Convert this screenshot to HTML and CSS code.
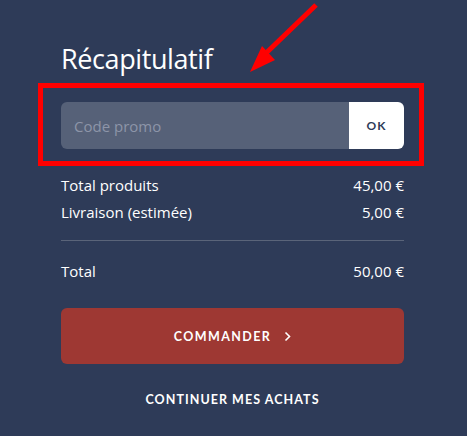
FILE: index.html
```html
<!DOCTYPE html>
<html lang="fr">
<head>
<meta charset="utf-8">
<link rel="stylesheet" href="styles.css">
</head>
<body>
<svg class="arrow" width="90" height="80" viewBox="0 0 90 80">
  <line x1="86" y1="5" x2="32" y2="57" stroke="#ff0000" stroke-width="5" stroke-linecap="butt"/>
  <polygon points="20,72 32,46 45,60" fill="#ff0000"/>
</svg>
<main class="summary">
  <h1 class="title">Récapitulatif</h1>
  <div class="promo">
    <div class="promo-input">Code promo</div>
    <div class="promo-ok">OK</div>
  </div>
  <div class="lines">
    <div class="line"><span>Total produits</span><span>45,00 €</span></div>
    <div class="line"><span>Livraison (estimée)</span><span>5,00 €</span></div>
  </div>
  <div class="divider"></div>
  <div class="line total"><span>Total</span><span>50,00 €</span></div>
  <div class="order">COMMANDER<svg class="chev" width="7" height="11" viewBox="0 0 7 11"><path d="M1.5 1.5 L5.5 5.5 L1.5 9.5" fill="none" stroke="#ffffff" stroke-width="1.6"/></svg></div>
  <div class="continue">CONTINUER MES ACHATS</div>
</main>
</body>
</html>
```
FILE: styles.css
```css
html, body {
  margin: 0;
  padding: 0;
}
body {
  background: #2e3b58;
  width: 467px;
  height: 436px;
  overflow: hidden;
  position: relative;
  font-family: "Open Sans", "Noto Sans", sans-serif;
  color: #ffffff;
}
.arrow {
  position: absolute;
  left: 230px;
  top: 0;
}
.summary {
  width: 343px;
  margin-left: 61px;
  padding-top: 40px;
  display: flex;
  flex-direction: column;
}
.title {
  margin: 0;
  font-size: 27px;
  font-weight: 400;
  line-height: 38px;
  letter-spacing: -0.4px;
}
.promo {
  position: relative;
  margin-top: 24px;
  height: 47px;
  display: flex;
}
.promo::after {
  content: "";
  position: absolute;
  left: -23px;
  right: -20px;
  top: -19px;
  bottom: -17px;
  border: 5px solid #ff0000;
  pointer-events: none;
}
.promo-input {
  flex: 1;
  background: #566178;
  border-radius: 6px 0 0 6px;
  color: #8d95a8;
  font-size: 15px;
  display: flex;
  align-items: center;
  padding-left: 13px;
}
.promo-ok {
  width: 55px;
  background: #ffffff;
  border-radius: 0 6px 6px 0;
  color: #2e3b58;
  font-family: "Lato", sans-serif;
  font-weight: 700;
  font-size: 12px;
  letter-spacing: 1px;
  display: flex;
  align-items: center;
  justify-content: center;
}
.lines {
  margin-top: 26px;
  display: flex;
  flex-direction: column;
  gap: 6px;
}
.line {
  display: flex;
  justify-content: space-between;
  font-size: 15px;
  line-height: 21px;
}
.divider {
  height: 1px;
  background: #5a6479;
  margin-top: 17px;
}
.total {
  margin-top: 20px;
}
.order {
  margin-top: 26px;
  height: 56px;
  background: #9e3833;
  border-radius: 6px;
  display: flex;
  align-items: center;
  justify-content: center;
  font-family: "Lato", sans-serif;
  font-weight: 700;
  font-size: 12.5px;
  letter-spacing: 1.4px;
}
.chev {
  margin-left: 13px;
  display: block;
}
.continue {
  margin-top: 28px;
  text-align: center;
  font-family: "Lato", sans-serif;
  font-weight: 700;
  font-size: 12.5px;
  letter-spacing: 1.05px;
}
```
